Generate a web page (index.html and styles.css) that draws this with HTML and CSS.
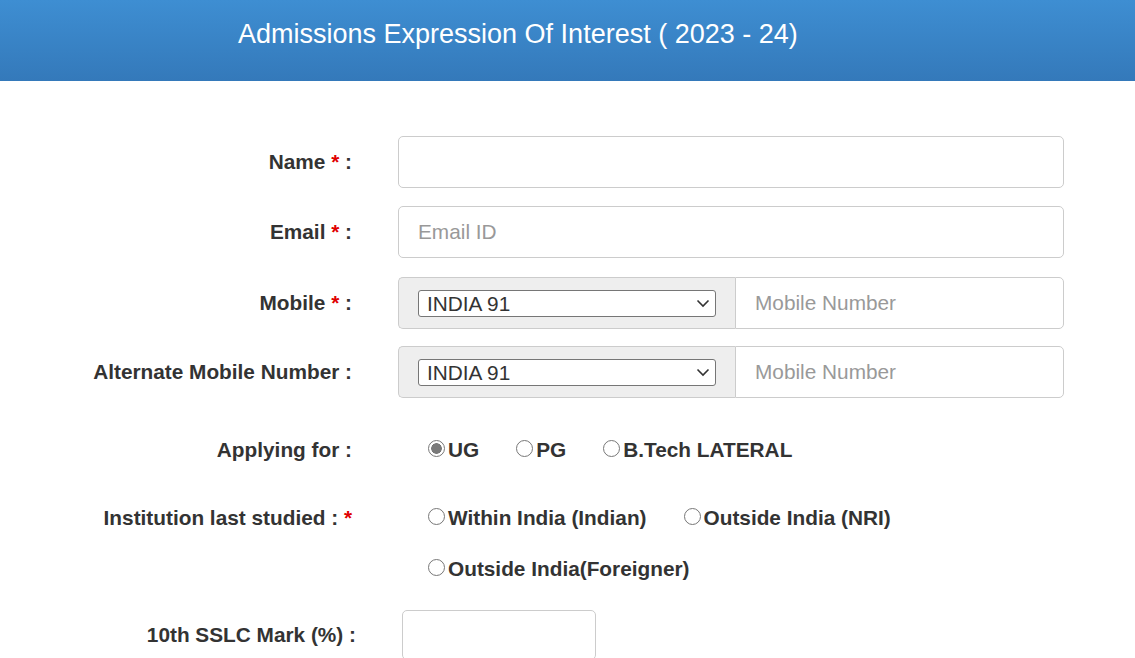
FILE: index.html
```html
<!DOCTYPE html>
<html lang="en">
<head>
<meta charset="utf-8">
<title>Admissions Expression Of Interest</title>
<link rel="stylesheet" href="styles.css">
</head>
<body>
<header class="banner">
  <h1 class="banner-title">Admissions Expression Of Interest ( 2023 - 24)</h1>
</header>
<form class="form">
  <div class="row">
    <label class="label">Name <span class="req">*</span> :</label>
    <div class="control"><input class="field" type="text"></div>
  </div>
  <div class="row row-email">
    <label class="label">Email <span class="req">*</span> :</label>
    <div class="control"><input class="field" type="text" placeholder="Email ID"></div>
  </div>
  <div class="row row-mobile">
    <label class="label">Mobile <span class="req">*</span> :</label>
    <div class="control group">
      <div class="addon">
        <div class="select-wrap">
          <select class="select"><option>INDIA 91</option></select>
          <svg class="chev" width="14" height="9" viewBox="0 0 14 9"><path d="M1.5 1.5 L7 7 L12.5 1.5" fill="none" stroke="#333" stroke-width="1.6"/></svg>
        </div>
      </div>
      <input class="field group-field" type="text" placeholder="Mobile Number">
    </div>
  </div>
  <div class="row">
    <label class="label">Alternate Mobile Number :</label>
    <div class="control group">
      <div class="addon">
        <div class="select-wrap">
          <select class="select"><option>INDIA 91</option></select>
          <svg class="chev" width="14" height="9" viewBox="0 0 14 9"><path d="M1.5 1.5 L7 7 L12.5 1.5" fill="none" stroke="#333" stroke-width="1.6"/></svg>
        </div>
      </div>
      <input class="field group-field" type="text" placeholder="Mobile Number">
    </div>
  </div>
  <div class="row row-radio row-apply">
    <label class="label">Applying for :</label>
    <div class="control radios">
      <div class="radio-line">
        <label class="opt"><input type="radio" name="apply" class="radio" checked>UG</label>
        <label class="opt"><input type="radio" name="apply" class="radio">PG</label>
        <label class="opt"><input type="radio" name="apply" class="radio">B.Tech LATERAL</label>
      </div>
    </div>
  </div>
  <div class="row row-radio row-inst">
    <label class="label">Institution last studied : <span class="req">*</span></label>
    <div class="control radios">
      <div class="radio-line">
        <label class="opt"><input type="radio" name="inst" class="radio">Within India (Indian)</label>
        <label class="opt"><input type="radio" name="inst" class="radio">Outside India (NRI)</label>
      </div>
      <div class="radio-line">
        <label class="opt"><input type="radio" name="inst" class="radio">Outside India(Foreigner)</label>
      </div>
    </div>
  </div>
  <div class="row row-mark">
    <label class="label label-mark">10th SSLC Mark (%) :</label>
    <div class="control control-mark"><input class="field field-mark" type="text"></div>
  </div>
</form>
</body>
</html>
```

FILE: styles.css
```css
html, body {
  margin: 0;
  padding: 0;
  background: #fff;
  font-family: "Liberation Sans", Arial, sans-serif;
  color: #333;
}
.banner {
  height: 81px;
  box-sizing: border-box;
  padding: 19px 0 0 238px;
  background: linear-gradient(to bottom, #3e8ed2 0%, #3479ba 100%);
}
.banner-title {
  margin: 0;
  font-weight: normal;
  font-size: 27px;
  line-height: 31px;
  color: #fff;
}
.form {
  padding-top: 55px;
}
.row {
  display: flex;
  align-items: center;
  margin-bottom: 18px;
}
.row-email {
  margin-bottom: 19px;
}
.row-mobile {
  margin-bottom: 17px;
}
.label {
  width: 352px;
  flex: none;
  text-align: right;
  font-weight: bold;
  font-size: 20.8px;
  line-height: 32px;
  color: #333;
}
.req {
  color: #e00000;
}
.control {
  margin-left: 46px;
  width: 666px;
}
.field {
  display: block;
  width: 100%;
  height: 52px;
  box-sizing: border-box;
  border: 1px solid #ccc;
  border-radius: 5px;
  padding: 0 19px;
  font-family: "Liberation Sans", Arial, sans-serif;
  font-size: 20.8px;
  color: #555;
  background: #fff;
  outline: none;
}
.field::placeholder {
  color: #999;
}
.group {
  display: flex;
}
.addon {
  width: 337px;
  height: 52px;
  box-sizing: border-box;
  flex: none;
  display: flex;
  align-items: center;
  padding: 0 19px;
  background: #eee;
  border: 1px solid #ccc;
  border-right: none;
  border-radius: 5px 0 0 5px;
}
.select-wrap {
  position: relative;
  width: 100%;
}
.select {
  display: block;
  width: 100%;
  height: 27px;
  box-sizing: border-box;
  -webkit-appearance: none;
  appearance: none;
  border: 1px solid #767676;
  border-radius: 3px;
  background: #fff;
  padding: 0 0 0 8px;
  font-family: "Liberation Sans", Arial, sans-serif;
  font-size: 20.8px;
  line-height: 25px;
  color: #333;
}
.chev {
  position: absolute;
  right: 6px;
  top: 9px;
}
.group-field {
  flex: 1;
  width: auto;
  border-radius: 0 5px 5px 0;
  padding-left: 19px;
}
.row-apply {
  margin-top: 36px;
  margin-bottom: 0;
}
.row-inst {
  margin-top: 36px;
  align-items: flex-start;
  margin-bottom: 0;
}
.radios {
  padding-left: 30px;
  box-sizing: border-box;
  display: flex;
  flex-direction: column;
  gap: 19px;
}
.radio-line {
  display: flex;
  gap: 37px;
  height: 32px;
  align-items: center;
}
.opt {
  display: flex;
  align-items: center;
  font-weight: bold;
  font-size: 20.8px;
  line-height: 32px;
  color: #333;
}
.radio {
  -webkit-appearance: none;
  appearance: none;
  width: 17px;
  height: 17px;
  margin: 0 3px 4px 0;
  border: 1px solid #777;
  border-radius: 50%;
  background: #fff;
  box-sizing: border-box;
}
.radio:checked {
  background: radial-gradient(circle, #7a7a7a 0 5px, #fff 5.6px);
}
.row-mark {
  margin-top: 25px;
}
.label-mark {
  width: 356px;
}
.control-mark {
  width: 194px;
}
.field-mark {
  height: 50px;
}
```
